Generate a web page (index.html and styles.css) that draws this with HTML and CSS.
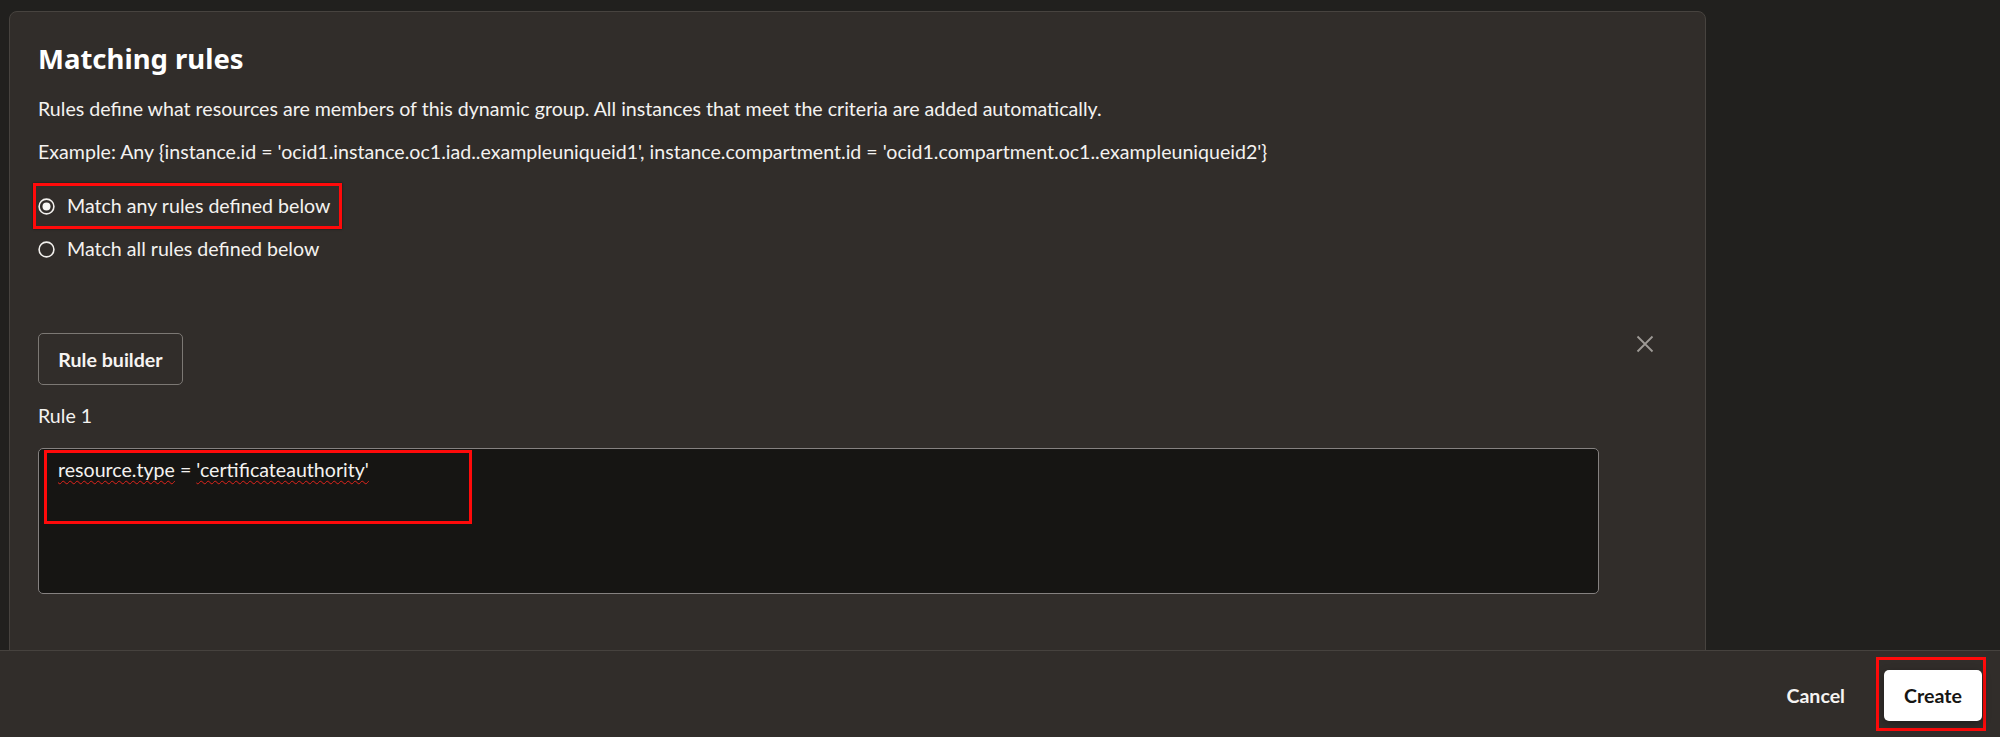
FILE: index.html
```html
<!DOCTYPE html>
<html lang="en">
<head>
<meta charset="utf-8">
<title>Matching rules</title>
<link rel="stylesheet" href="styles.css">
</head>
<body>
<div class="page">
  <main class="main">
    <section class="card">
      <h2 class="title">Matching rules</h2>
      <p class="text">Rules define what resources are members of this dynamic group. All instances that meet the criteria are added automatically.</p>
      <p class="text example">Example: Any {instance.id = 'ocid1.instance.oc1.iad..exampleuniqueid1', instance.compartment.id = 'ocid1.compartment.oc1..exampleuniqueid2'}</p>
      <div class="radios">
        <div class="highlight radio-box">
          <label class="radio">
            <svg class="radio-icon" width="17" height="17" viewBox="0 0 17 17"><circle cx="8.5" cy="8.5" r="7.4" fill="none" stroke="#f2f0ed" stroke-width="1.6"/><circle cx="8.5" cy="8.5" r="4" fill="#f7f6f4"/></svg>
            <span>Match any rules defined below</span>
          </label>
        </div>
        <label class="radio radio-plain">
          <svg class="radio-icon" width="17" height="17" viewBox="0 0 17 17"><circle cx="8.5" cy="8.5" r="7.4" fill="none" stroke="#f2f0ed" stroke-width="1.6"/></svg>
          <span>Match all rules defined below</span>
        </label>
      </div>
      <div class="rule-head">
        <button class="btn-outline">Rule builder</button>
        <button class="close" aria-label="Remove rule">
          <svg width="18" height="18" viewBox="0 0 18 18"><path d="M1.5 1.5 L16.5 16.5 M16.5 1.5 L1.5 16.5" stroke="#9e9a96" stroke-width="1.8" fill="none"/></svg>
        </button>
      </div>
      <div class="label">Rule 1</div>
      <div class="textarea">
        <div class="highlight code-box"><span class="spell">resource.type</span> = <span class="spell">'certificateauthority'</span></div>
      </div>
    </section>
  </main>
  <footer class="footer">
    <button class="btn-link">Cancel</button>
    <div class="highlight create-box">
      <button class="btn-primary">Create</button>
    </div>
  </footer>
  <div class="strip"></div>
</div>
</body>
</html>
```
FILE: styles.css
```css
* { box-sizing: border-box; }
html, body { margin: 0; padding: 0; }
body {
  background: #ffffff;
  font-family: Lato, "Noto Sans", sans-serif;
  font-size: 19.6px;
  color: #f4f2f0;
}
.page {
  height: 747px;
  display: flex;
  flex-direction: column;
  overflow: hidden;
}
.main {
  flex: 1;
  min-height: 0;
  overflow: hidden;
  background: #21201e;
  padding: 11px 0 0 9px;
}
.card {
  width: 1697px;
  height: 760px;
  background: #312d2a;
  border: 1px solid #47433f;
  border-radius: 8px 8px 0 0;
  padding: 29px 51px 0 28px;
}
.title {
  margin: 0;
  font-family: "Noto Sans", Lato, sans-serif;
  font-weight: 700;
  font-size: 27.5px;
  line-height: 36px;
  color: #ffffff;
}
.text {
  margin: 20px 0 0;
  line-height: 24px;
  white-space: nowrap;
}
.example { margin-top: 19px; }
.radios {
  margin-top: 19px;
  display: flex;
  flex-direction: column;
  align-items: flex-start;
}
.highlight { border: 3px solid #ff0a0a; }
.radio-box {
  margin-left: -5px;
  padding: 8px 9px 8px 2px;
  box-shadow: 0 0 2px rgba(0,0,0,0.6);
}
.radio {
  display: flex;
  align-items: center;
  gap: 12px;
  line-height: 24px;
  white-space: nowrap;
}
.radio-icon { flex: none; }
.radio-plain {
  margin-top: 8px;
  padding-left: 0;
}
.rule-head {
  margin-top: 72px;
  display: flex;
  justify-content: space-between;
  align-items: flex-start;
}
.btn-outline {
  font-family: Lato, "Noto Sans", sans-serif;
  font-size: 19.6px;
  font-weight: 700;
  color: #f6f4f2;
  background: transparent;
  border: 1.5px solid #7c7874;
  border-radius: 5px;
  height: 52px;
  width: 145px;
  padding: 0;
}
.close {
  background: none;
  border: 0;
  padding: 0;
  margin-top: 2px;
  width: 18px;
  height: 18px;
  display: flex;
}
.label {
  margin-top: 19px;
  line-height: 24px;
}
.textarea {
  margin-top: 20px;
  width: 1561px;
  height: 146px;
  background: #161513;
  border: 1.5px solid #858180;
  border-radius: 5px;
  padding: 1px 0 0 5px;
}
.code-box {
  width: 428px;
  height: 74px;
  padding: 5px 0 0 11px;
  line-height: 24px;
  color: #f4f2f0;
  white-space: nowrap;
}
.spell {
  text-decoration: underline wavy #e0241b;
  text-decoration-thickness: 1px;
  text-underline-offset: 3px;
}
.footer {
  height: 87px;
  flex: none;
  background: #312d2a;
  border-top: 1px solid #46423e;
  display: flex;
  justify-content: flex-end;
  align-items: center;
  padding-right: 14px;
}
.btn-link {
  font-family: Lato, "Noto Sans", sans-serif;
  font-size: 19.6px;
  font-weight: 700;
  color: #f6f4f2;
  background: none;
  border: 0;
  padding: 0;
  margin-right: 31px;
  margin-top: 2px;
}
.create-box {
  padding: 10px 1px 7px 5px;
}
.btn-primary {
  display: block;
  width: 98px;
  height: 51px;
  font-family: Lato, "Noto Sans", sans-serif;
  font-size: 19.6px;
  font-weight: 700;
  color: #161513;
  background: #ffffff;
  border: 0;
  border-radius: 5px;
  padding: 0;
  box-shadow: 0 3px 8px rgba(0,0,0,0.35);
}
.strip {
  height: 10px;
  flex: none;
  background: #ffffff;
}
```
